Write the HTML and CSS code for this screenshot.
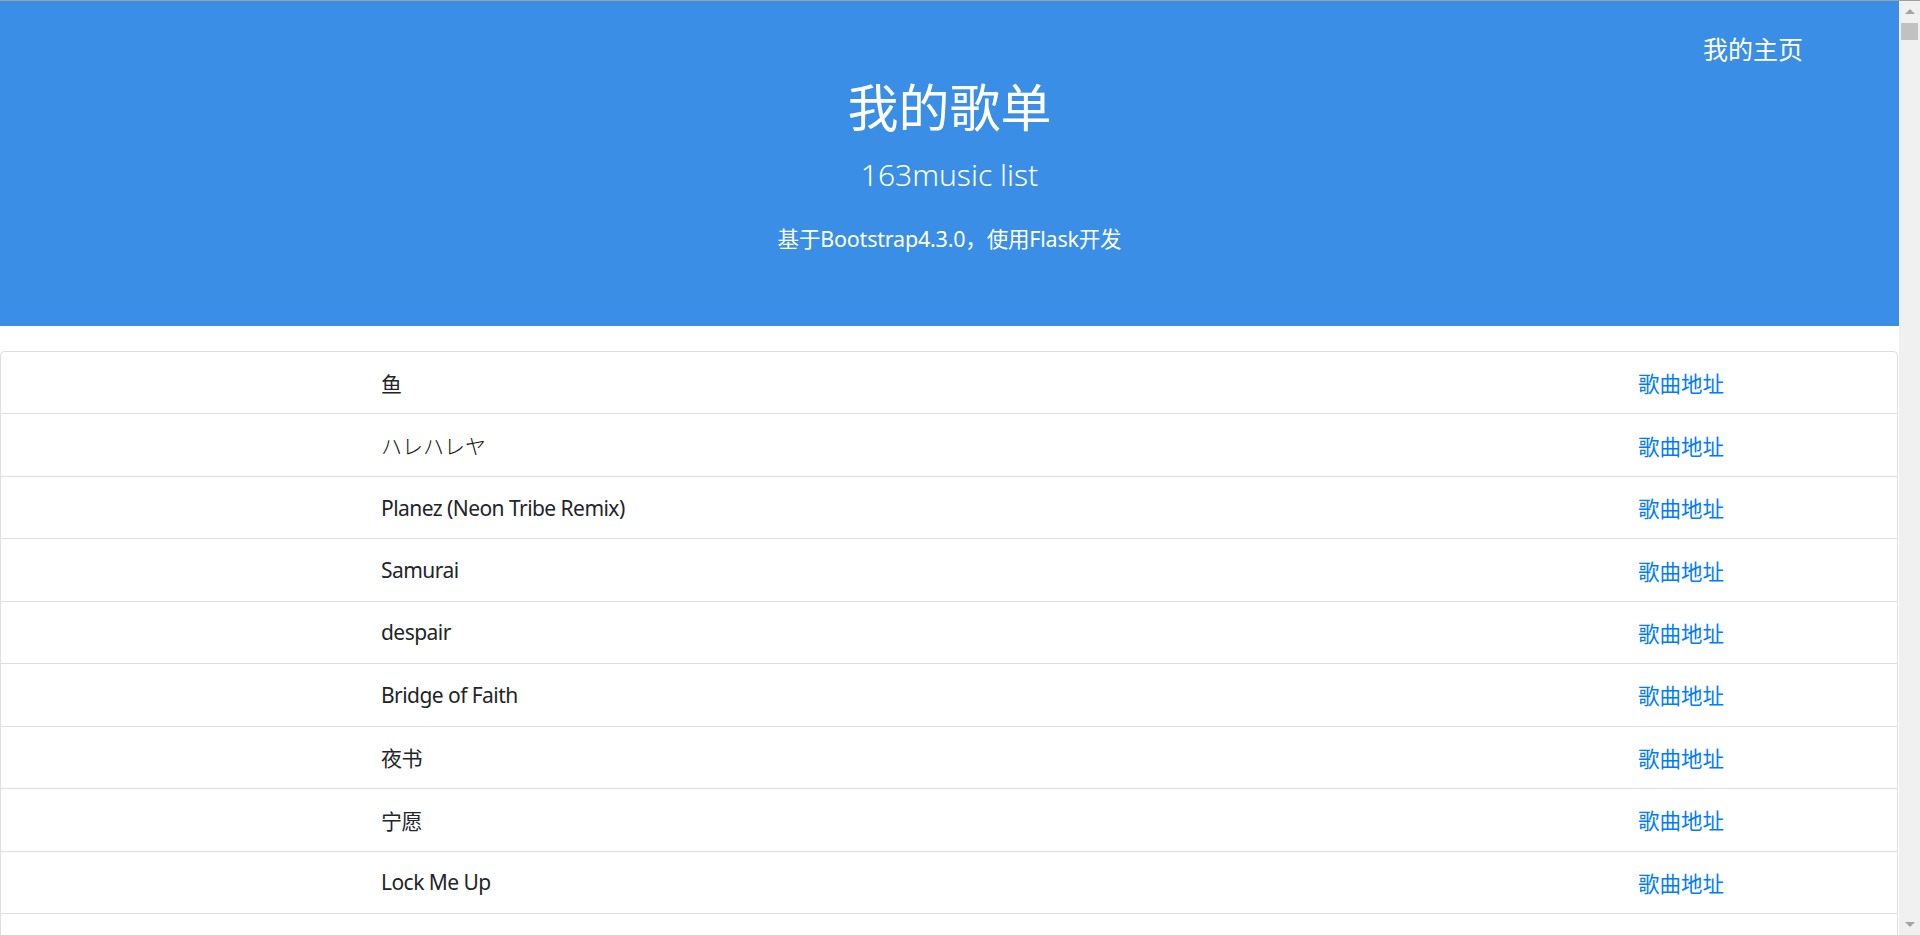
FILE: index.html
```html
<!DOCTYPE html>
<html lang="zh-CN">
<head>
<meta charset="utf-8">
<title>我的歌单</title>
<link rel="stylesheet" href="styles.css">
</head>
<body>
<div class="window">
  <div class="page">
    <header class="hero">
      <nav class="hero-nav"><a class="home-link" href="#">我的主页</a></nav>
      <h1 class="hero-title">我的歌单</h1>
      <p class="hero-sub">163music list</p>
      <p class="hero-desc">基于Bootstrap4.3.0，使用Flask开发</p>
    </header>
    <ul class="songs">
      <li class="song"><span class="song-name">鱼</span><a class="song-link" href="#">歌曲地址</a></li>
      <li class="song"><span class="song-name song-jp">ハレハレヤ</span><a class="song-link" href="#">歌曲地址</a></li>
      <li class="song"><span class="song-name">Planez (Neon Tribe Remix)</span><a class="song-link" href="#">歌曲地址</a></li>
      <li class="song"><span class="song-name">Samurai</span><a class="song-link" href="#">歌曲地址</a></li>
      <li class="song"><span class="song-name">despair</span><a class="song-link" href="#">歌曲地址</a></li>
      <li class="song"><span class="song-name">Bridge of Faith</span><a class="song-link" href="#">歌曲地址</a></li>
      <li class="song"><span class="song-name">夜书</span><a class="song-link" href="#">歌曲地址</a></li>
      <li class="song"><span class="song-name">宁愿</span><a class="song-link" href="#">歌曲地址</a></li>
      <li class="song"><span class="song-name">Lock Me Up</span><a class="song-link" href="#">歌曲地址</a></li>
      <li class="song"><span class="song-name">unravel</span><a class="song-link" href="#">歌曲地址</a></li>
    </ul>
  </div>
  <div class="scrollbar">
    <div class="sb-btn"><span class="sb-arrow-up"></span></div>
    <div class="sb-thumb"></div>
    <div class="sb-track"></div>
    <div class="sb-btn"><span class="sb-arrow-down"></span></div>
  </div>
</div>
</body>
</html>
```

FILE: styles.css
```css
html, body {
  margin: 0;
  height: 100%;
  overflow: hidden;
}

body {
  font-family: "Noto Sans", "Noto Sans CJK SC", sans-serif;
  color: #212529;
  background: #fff;
}

.window {
  display: flex;
  height: 935px;
  border-top: 1px solid #a0a0a0;
  box-sizing: border-box;
}

.page {
  flex: 1;
  min-width: 0;
  overflow: hidden;
}

/* header */
.hero {
  height: 325px;
  background: #3a8ee6;
  color: #fff;
  display: flex;
  flex-direction: column;
  align-items: center;
  box-sizing: border-box;
  padding-top: 30px;
}

.hero-nav {
  align-self: stretch;
  display: flex;
  justify-content: flex-end;
  padding-right: 96px;
}

.home-link {
  color: #fff;
  text-decoration: none;
  font-size: 25px;
  line-height: 37px;
}

.hero-title {
  margin: 9px 0 0;
  font-size: 51px;
  font-weight: 400;
  line-height: 61px;
}

.hero-sub {
  margin: 14px 0 0;
  font-size: 30px;
  font-weight: 300;
  line-height: 45px;
}

.hero-desc {
  margin: 26px 0 0;
  font-size: 21.5px;
  line-height: 32px;
  letter-spacing: -0.2px;
}

/* song list */
.songs {
  list-style: none;
  margin: 25px 1px 0 0;
  padding: 0;
  border: 1px solid #dfdfdf;
  border-bottom: 0;
  border-radius: 5px 5px 0 0;
}

.song {
  display: grid;
  grid-template-columns: 380px 1257px auto;
  align-items: center;
  height: 61.45px;
  font-size: 21px;
}

.song + .song {
  border-top: 1px solid #dfdfdf;
}

.song-name {
  grid-column: 2;
  color: #212529;
  letter-spacing: -0.55px;
}

.song-jp {
  font-family: "Noto Sans CJK JP", sans-serif;
  font-weight: 300;
  color: #111;
  letter-spacing: 0;
}

.song-link {
  grid-column: 3;
  color: #007bff;
  text-decoration: none;
  font-size: 21.5px;
}

/* fake window scrollbar */
.scrollbar {
  width: 21px;
  flex: none;
  background: #f0f0f0;
  display: flex;
  flex-direction: column;
}

.sb-btn {
  height: 21px;
  display: flex;
  align-items: center;
  justify-content: center;
}

.sb-arrow-up {
  border-left: 5px solid transparent;
  border-right: 5px solid transparent;
  border-bottom: 5px solid #a3a3a3;
}

.sb-arrow-down {
  border-left: 5px solid transparent;
  border-right: 5px solid transparent;
  border-top: 5px solid #a3a3a3;
}

.sb-thumb {
  height: 17px;
  margin: 1px 2px 0;
  background: #c1c1c1;
}

.sb-track {
  flex: 1;
}
```
